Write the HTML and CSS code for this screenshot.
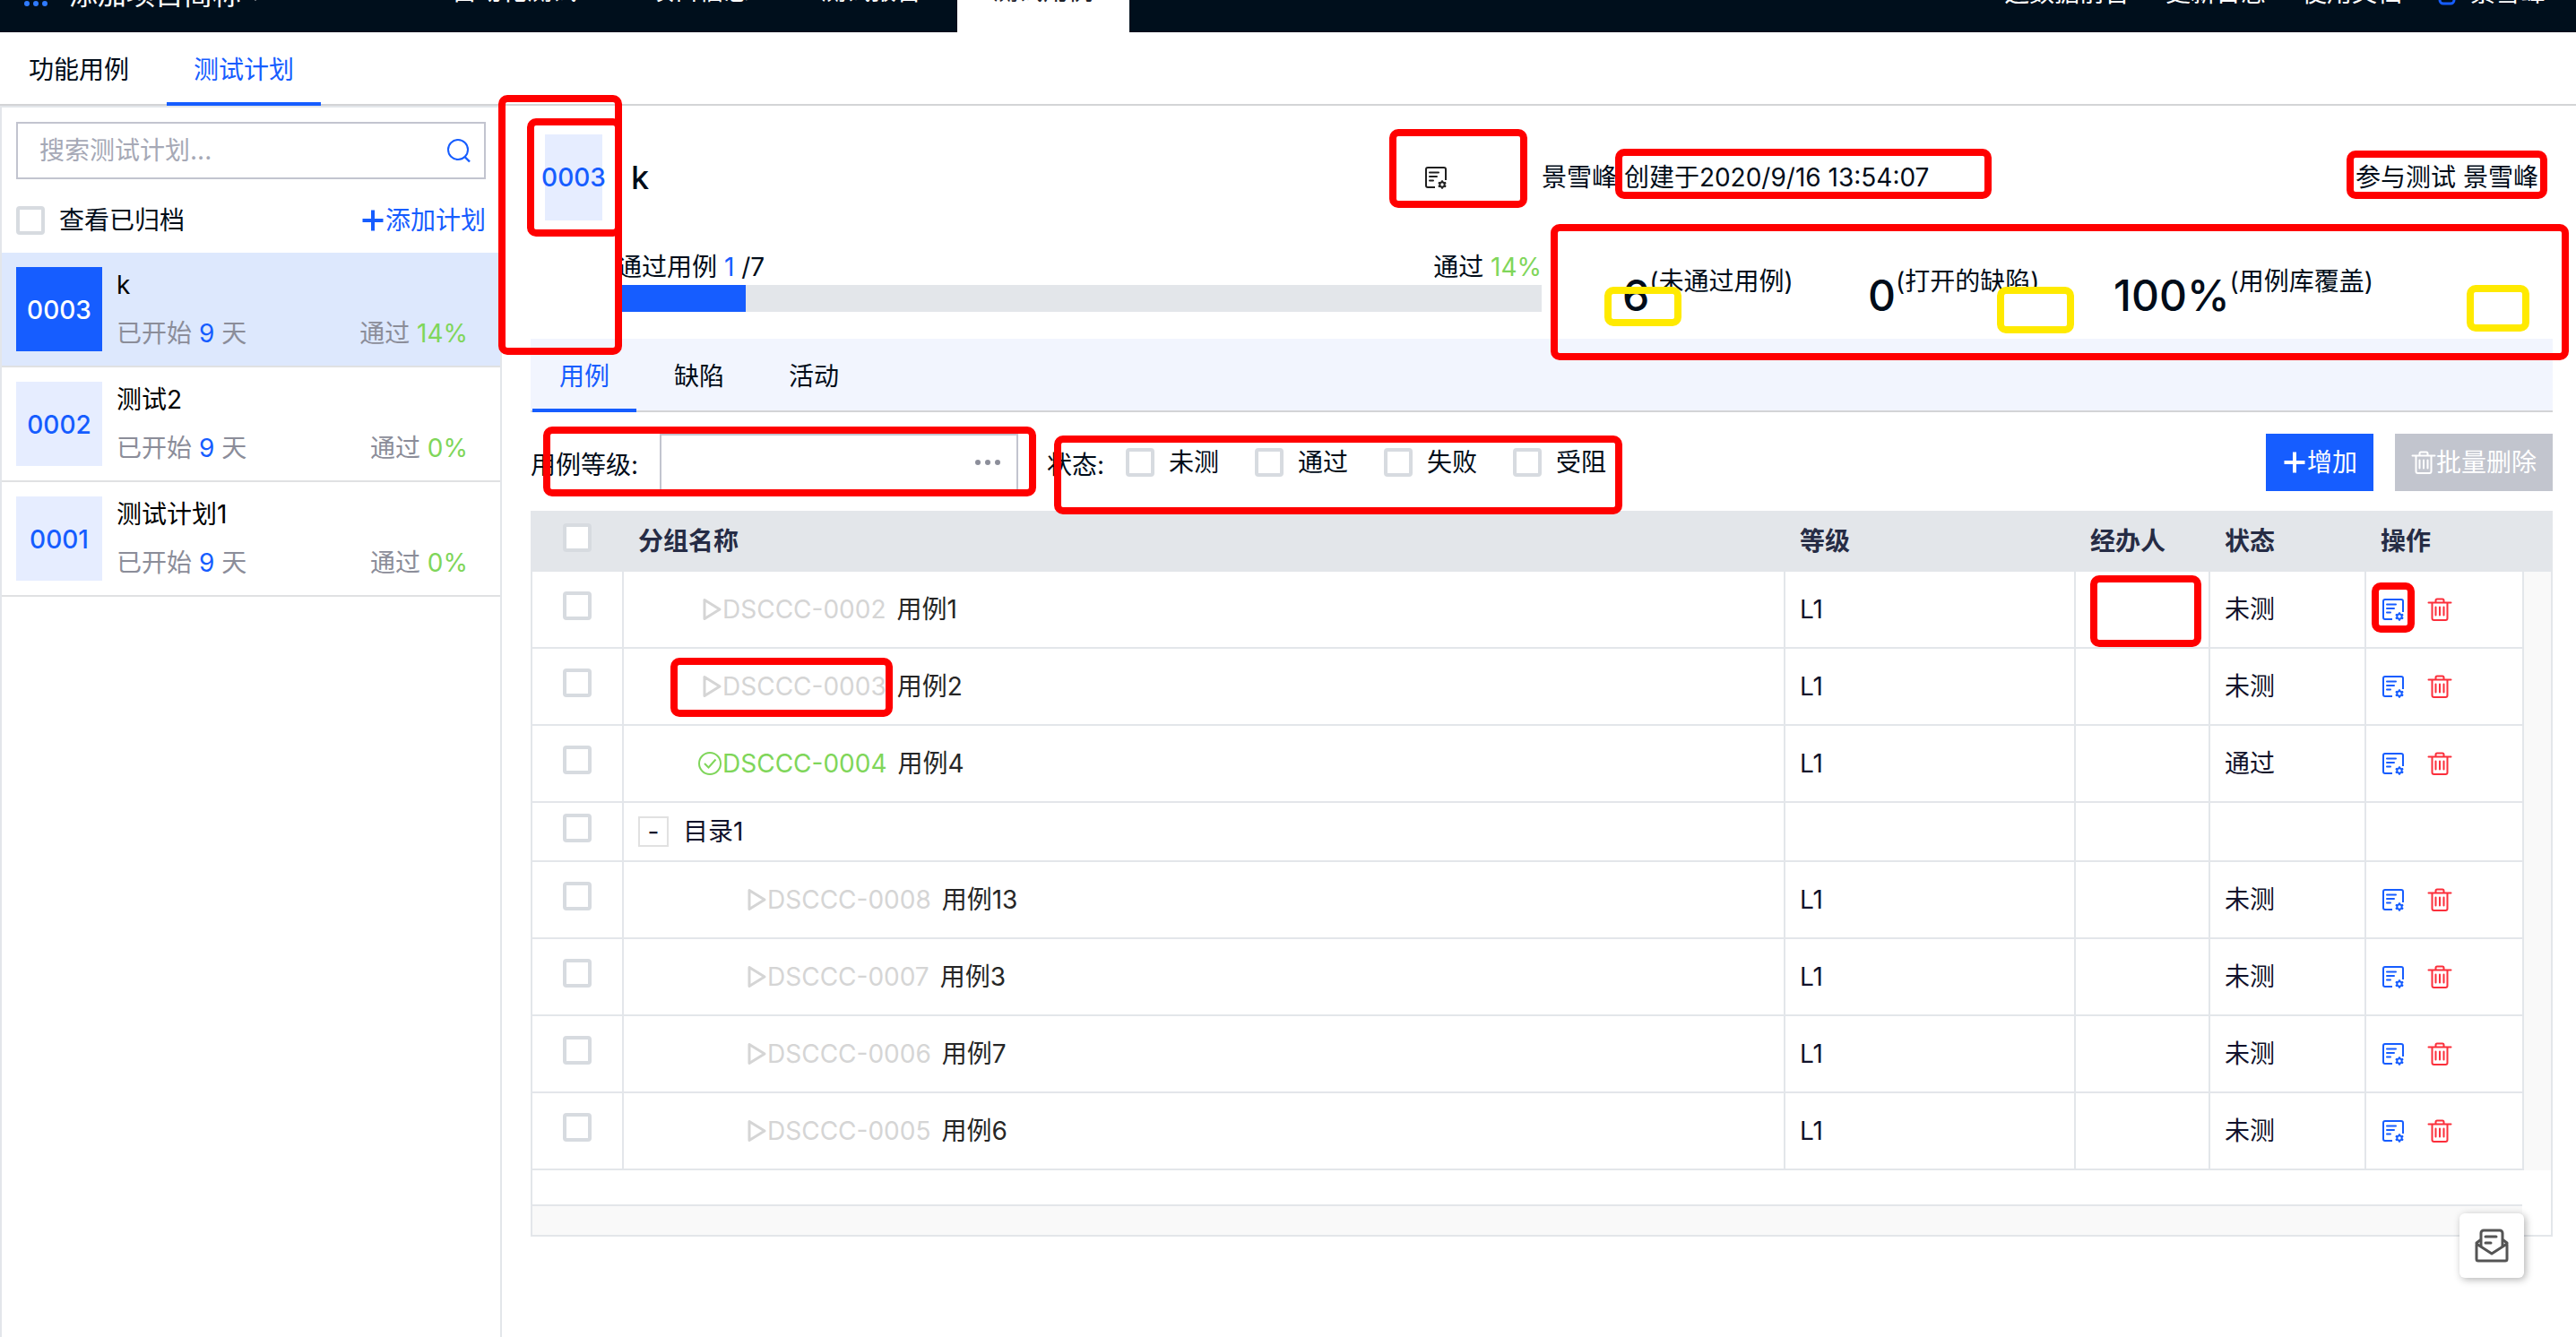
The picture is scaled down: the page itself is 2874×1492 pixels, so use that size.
FILE: index.html
```html
<!DOCTYPE html>
<html lang="zh-CN">
<head>
<meta charset="utf-8">
<title>测试计划</title>
<link rel="stylesheet" href="styles.css">
</head>
<body>
<svg class="sprite" aria-hidden="true">
  <symbol id="i-doc" viewBox="0 0 28 28">
    <path d="M13 25H5a2 2 0 0 1-2-2V5a2 2 0 0 1 2-2h18a2 2 0 0 1 2 2v12" fill="none" stroke="currentColor" stroke-width="2"/>
    <path d="M7 8.500h10M7 13h8M7 17.500h4" fill="none" stroke="currentColor" stroke-width="2" stroke-linecap="round"/>
    <circle cx="21" cy="22" r="2.700" fill="none" stroke="currentColor" stroke-width="2"/>
    <path d="M21 17.200v2M21 24.800v2M16.800 19.600l1.700 1M23.500 23.400l1.700 1M16.800 24.400l1.700-1M23.500 20.600l1.700-1" stroke="currentColor" stroke-width="1.800"/>
  </symbol>
  <symbol id="i-trash" viewBox="0 0 28 28">
    <path d="M1.500 6.500h25M9.500 6V4a1.500 1.500 0 0 1 1.500-1.500h6A1.500 1.500 0 0 1 18.500 4v2M5.500 6.500V24a2 2 0 0 0 2 2h13a2 2 0 0 0 2-2V6.500M9.500 11.500v9M14 11.500v9M18.500 11.500v9" fill="none" stroke="currentColor" stroke-width="2" stroke-linecap="round"/>
  </symbol>
  <symbol id="i-plus" viewBox="0 0 28 28">
    <path d="M14 2.500v23M2.500 14h23" stroke="currentColor" stroke-width="4"/>
  </symbol>
  <symbol id="i-play" viewBox="0 0 28 28">
    <path d="M8 3.500v21L25 14z" fill="none" stroke="currentColor" stroke-width="3" stroke-linejoin="round"/>
  </symbol>
  <symbol id="i-ok" viewBox="0 0 28 28">
    <circle cx="14" cy="14" r="12" fill="none" stroke="currentColor" stroke-width="2"/>
    <path d="M8 14l4.500 4.500L20.500 9.500" fill="none" stroke="currentColor" stroke-width="2"/>
  </symbol>
</svg>

<header class="topbar">
  <div class="brand">
    <svg class="grid-dots" viewBox="0 0 26 26"><g fill="#2f7bff"><circle cx="3" cy="3" r="3"/><circle cx="13" cy="3" r="3"/><circle cx="23" cy="3" r="3"/><circle cx="3" cy="13" r="3"/><circle cx="13" cy="13" r="3"/><circle cx="23" cy="13" r="3"/><circle cx="3" cy="23" r="3"/><circle cx="13" cy="23" r="3"/><circle cx="23" cy="23" r="3"/></g></svg>
    <span>添加项目简称</span>
    <svg class="caret" viewBox="0 0 16 10"><path d="M1 0h14L8 9z" fill="#fff"/></svg>
  </div>
  <nav class="topnav">
    <a href="#">自动化测试</a>
    <a href="#">项目信息</a>
    <a href="#">测试报告</a>
    <a href="#" class="active">测试用例</a>
  </nav>
  <div class="toplinks">
    <a href="#">造数据前台</a>
    <a href="#">更新日志</a>
    <a href="#">使用文档</a>
    <a href="#" class="user"><svg viewBox="0 0 20 28"><rect x="2" y="12" width="16" height="14" rx="4" fill="none" stroke="#165dff" stroke-width="3"/><circle cx="10" cy="6" r="5" fill="#165dff"/></svg>景雪峰</a>
  </div>
</header>

<nav class="tabs">
  <a href="#">功能用例</a>
  <a href="#" class="active">测试计划</a>
</nav>

<div class="page">
  <aside class="sidebar">
    <div class="search">
      <input type="text" placeholder="搜索测试计划..." aria-label="搜索测试计划">
      <svg viewBox="0 0 28 28"><circle cx="13" cy="13" r="11" fill="none" stroke="#165dff" stroke-width="2"/><path d="M20 20.500l6 6" stroke="#165dff" stroke-width="2.400"/></svg>
    </div>
    <div class="side-tools">
      <label class="check"><input type="checkbox">查看已归档</label>
      <button class="link-btn" type="button"><svg class="icon"><use href="#i-plus"/></svg>添加计划</button>
    </div>
    <ul class="plans">
      <li class="plan selected">
        <span class="tile">0003</span>
        <div class="plan-body">
          <div class="plan-name">k</div>
          <div class="plan-meta"><span>已开始 <b class="blue">9</b> 天</span><span>通过 <b class="green">14%</b></span></div>
        </div>
      </li>
      <li class="plan">
        <span class="tile">0002</span>
        <div class="plan-body">
          <div class="plan-name">测试2</div>
          <div class="plan-meta"><span>已开始 <b class="blue">9</b> 天</span><span>通过 <b class="green">0%</b></span></div>
        </div>
      </li>
      <li class="plan">
        <span class="tile">0001</span>
        <div class="plan-body">
          <div class="plan-name">测试计划1</div>
          <div class="plan-meta"><span>已开始 <b class="blue">9</b> 天</span><span>通过 <b class="green">0%</b></span></div>
        </div>
      </li>
    </ul>
  </aside>

  <main class="content">
    <section class="summary">
      <div class="half">
        <div class="head">
          <span class="head-tile">0003</span>
          <h1>k</h1>
          <button class="icon-btn dark" type="button" aria-label="编辑"><svg class="icon"><use href="#i-doc"/></svg></button>
        </div>
        <div class="progress">
          <div class="progress-text"><span>通过用例 <span class="blue">1</span> /7</span><span>通过 <span class="green">14%</span></span></div>
          <div class="bar"><div class="fill" style="width: 14%"></div></div>
        </div>
      </div>
      <div class="half">
        <div class="head meta"><span>景雪峰 创建于2020/9/16 13:54:07</span><span>参与测试 景雪峰</span></div>
        <div class="stats">
          <div><strong>6</strong><span>(未通过用例)</span></div>
          <div><strong>0</strong><span>(打开的缺陷)</span></div>
          <div><strong>100%</strong><span>(用例库覆盖)</span></div>
        </div>
      </div>
    </section>

    <nav class="tabs tinted">
      <a href="#" class="active">用例</a>
      <a href="#">缺陷</a>
      <a href="#">活动</a>
    </nav>

    <div class="filters">
      <label for="level">用例等级:</label>
      <div class="picker">
        <input id="level" type="text">
        <svg viewBox="0 0 28 6"><g fill="#8c8e9a"><circle cx="3" cy="3" r="3"/><circle cx="14" cy="3" r="3"/><circle cx="25" cy="3" r="3"/></g></svg>
      </div>
      <span class="state-label">状态:</span>
      <div class="states">
        <label class="check"><input type="checkbox">未测</label>
        <label class="check"><input type="checkbox">通过</label>
        <label class="check"><input type="checkbox">失败</label>
        <label class="check"><input type="checkbox">受阻</label>
      </div>
      <div class="actions">
        <button class="btn primary" type="button"><svg class="icon"><use href="#i-plus"/></svg>增加</button>
        <button class="btn" type="button" disabled><svg class="icon"><use href="#i-trash"/></svg>批量删除</button>
      </div>
    </div>

    <div class="table-box">
      <table>
        <colgroup><col class="c-check"><col><col class="c-level"><col class="c-owner"><col class="c-state"><col class="c-ops"><col class="c-gutter"></colgroup>
        <thead>
          <tr><th class="pick"><input type="checkbox" aria-label="全选"></th><th>分组名称</th><th>等级</th><th>经办人</th><th>状态</th><th>操作</th><th></th></tr>
        </thead>
        <tbody>
          <tr><td class="pick"><input type="checkbox" aria-label="用例1"></td><td><div class="case"><a href="#" class="code"><svg class="icon"><use href="#i-play"/></svg>DSCCC-0002</a>用例1</div></td><td>L1</td><td></td><td>未测</td><td><div class="ops"><button class="icon-btn" type="button" aria-label="编辑"><svg class="icon"><use href="#i-doc"/></svg></button><button class="icon-btn red" type="button" aria-label="删除"><svg class="icon"><use href="#i-trash"/></svg></button></div></td><td class="gutter" rowspan="8"></td></tr>
          <tr><td class="pick"><input type="checkbox" aria-label="用例2"></td><td><div class="case"><a href="#" class="code"><svg class="icon"><use href="#i-play"/></svg>DSCCC-0003</a>用例2</div></td><td>L1</td><td></td><td>未测</td><td><div class="ops"><button class="icon-btn" type="button" aria-label="编辑"><svg class="icon"><use href="#i-doc"/></svg></button><button class="icon-btn red" type="button" aria-label="删除"><svg class="icon"><use href="#i-trash"/></svg></button></div></td></tr>
          <tr><td class="pick"><input type="checkbox" aria-label="用例4"></td><td><div class="case"><a href="#" class="code green"><svg class="icon"><use href="#i-ok"/></svg>DSCCC-0004</a>用例4</div></td><td>L1</td><td></td><td>通过</td><td><div class="ops"><button class="icon-btn" type="button" aria-label="编辑"><svg class="icon"><use href="#i-doc"/></svg></button><button class="icon-btn red" type="button" aria-label="删除"><svg class="icon"><use href="#i-trash"/></svg></button></div></td></tr>
          <tr class="folder"><td class="pick"><input type="checkbox" aria-label="目录1"></td><td><div class="dir"><button class="toggle" type="button">-</button>目录1</div></td><td></td><td></td><td></td><td></td></tr>
          <tr><td class="pick"><input type="checkbox" aria-label="用例13"></td><td><div class="case nested"><a href="#" class="code"><svg class="icon"><use href="#i-play"/></svg>DSCCC-0008</a>用例13</div></td><td>L1</td><td></td><td>未测</td><td><div class="ops"><button class="icon-btn" type="button" aria-label="编辑"><svg class="icon"><use href="#i-doc"/></svg></button><button class="icon-btn red" type="button" aria-label="删除"><svg class="icon"><use href="#i-trash"/></svg></button></div></td></tr>
          <tr><td class="pick"><input type="checkbox" aria-label="用例3"></td><td><div class="case nested"><a href="#" class="code"><svg class="icon"><use href="#i-play"/></svg>DSCCC-0007</a>用例3</div></td><td>L1</td><td></td><td>未测</td><td><div class="ops"><button class="icon-btn" type="button" aria-label="编辑"><svg class="icon"><use href="#i-doc"/></svg></button><button class="icon-btn red" type="button" aria-label="删除"><svg class="icon"><use href="#i-trash"/></svg></button></div></td></tr>
          <tr><td class="pick"><input type="checkbox" aria-label="用例7"></td><td><div class="case nested"><a href="#" class="code"><svg class="icon"><use href="#i-play"/></svg>DSCCC-0006</a>用例7</div></td><td>L1</td><td></td><td>未测</td><td><div class="ops"><button class="icon-btn" type="button" aria-label="编辑"><svg class="icon"><use href="#i-doc"/></svg></button><button class="icon-btn red" type="button" aria-label="删除"><svg class="icon"><use href="#i-trash"/></svg></button></div></td></tr>
          <tr><td class="pick"><input type="checkbox" aria-label="用例6"></td><td><div class="case nested"><a href="#" class="code"><svg class="icon"><use href="#i-play"/></svg>DSCCC-0005</a>用例6</div></td><td>L1</td><td></td><td>未测</td><td><div class="ops"><button class="icon-btn" type="button" aria-label="编辑"><svg class="icon"><use href="#i-doc"/></svg></button><button class="icon-btn red" type="button" aria-label="删除"><svg class="icon"><use href="#i-trash"/></svg></button></div></td></tr>
        </tbody>
      </table>
      <div class="scroll-track"></div>
    </div>
  </main>
</div>

<button class="feedback" type="button" aria-label="反馈">
  <svg viewBox="0 0 40 40" fill="none" stroke="#545454" stroke-width="3" stroke-linejoin="round" stroke-linecap="round">
    <path d="M8 20V6a3 3 0 0 1 3-3h18a3 3 0 0 1 3 3v14"/>
    <path d="M13 10h12M13 17h6"/>
    <path d="M7 14l-4 3v18a2 2 0 0 0 2 2h30a2 2 0 0 0 2-2V17l-4-3M3 18l17 11 17-11"/>
  </svg>
</button>

<!-- review marks drawn over the page -->
<div class="marks">
  <i class="m-side"></i><i class="m-tile"></i><i class="m-edit"></i><i class="m-created"></i><i class="m-members"></i><i class="m-stats"></i>
  <i class="m-level"></i><i class="m-state"></i><i class="m-owner"></i><i class="m-op"></i><i class="m-code"></i>
  <i class="yellow m-y1"></i><i class="yellow m-y2"></i><i class="yellow m-y3"></i>
</div>
</body>
</html>
```
FILE: styles.css
```css
* { box-sizing: border-box; }

body {
  margin: 0;
  position: relative;
  min-height: 100vh;
  display: flex;
  flex-direction: column;
  overflow-x: hidden;
  background: #fff;
  color: #000c19;
  font: 28px/40px Inter, "Noto Sans CJK SC", sans-serif;
}

a { color: inherit; text-decoration: none; }
button, input { font: inherit; color: inherit; margin: 0; }
button { border: 0; padding: 0; background: none; }
h1, ul { margin: 0; padding: 0; }
ul { list-style: none; }
b { font-weight: 400; }

.sprite { display: none; }
.icon { width: 28px; height: 28px; flex: none; display: block; }
.blue { color: #165dff; }
.green { color: #7fd65a; }

input[type="checkbox"] {
  appearance: none;
  display: block;
  flex: none;
  width: 32px;
  height: 32px;
  background: #fff;
  border: 4px solid #d7dbe0;
  border-radius: 4px;
}
.check { display: flex; align-items: center; gap: 16px; }

/* top bar, scrolled partly out of view */
.topbar {
  flex: none;
  display: flex;
  height: 88px;
  margin-top: -52px;
  background: #000f1c;
  color: #fff;
}
.brand {
  display: flex;
  align-items: center;
  width: 464px;
  padding: 4px 0 0 27px;
  font-size: 32px;
}
.grid-dots { width: 26px; height: 26px; margin-right: 24px; }
.caret { width: 16px; height: 10px; margin: 6px 0 0 8px; }
.topnav { display: flex; }
.topnav a { padding: 22px 40px; }
.topnav .active { background: #fff; color: #1d2129; }
.toplinks {
  display: flex;
  gap: 40px;
  margin-left: auto;
  padding: 24px 34px 0 0;
}
.user { display: flex; gap: 16px; }
.user svg { width: 20px; height: 28px; margin-top: 6px; }

.tabs {
  flex: none;
  display: flex;
  gap: 12px;
  height: 82px;
  padding-left: 2px;
  border-bottom: 2px solid #d3d4d6;
}
.tabs a {
  height: 82px;
  padding: 22px 30px 0;
  border-bottom: 4px solid transparent;
}
.tabs .active { color: #165dff; border-color: #165dff; }
.tinted { background: #f2f5fe; margin-top: 12px; }

.page { flex: 1; display: flex; }

/* plan list */
.sidebar {
  flex: none;
  width: 560px;
  border: 2px solid #e3e6ea;
  border-bottom: 0;
}
.search {
  display: flex;
  align-items: center;
  height: 64px;
  margin: 16px 16px 0;
  padding: 0 14px 0 24px;
  border: 2px solid #c2c4cf;
}
.search input {
  flex: 1;
  min-width: 0;
  height: 40px;
  padding: 0;
  border: 0;
  outline: 0;
}
.search input::placeholder { color: #a6a9b6; opacity: 1; }
.search svg { width: 28px; height: 28px; }
.side-tools {
  display: flex;
  justify-content: space-between;
  align-items: center;
  height: 82px;
  padding: 10px 16px 0;
}
.link-btn { display: flex; align-items: center; color: #165dff; }
.plan {
  display: flex;
  gap: 16px;
  height: 128px;
  padding: 16px 36px 0 16px;
  border-bottom: 2px solid #e0e1e3;
}
.selected { background: #dde8fd; }
.tile {
  flex: none;
  width: 96px;
  height: 94px;
  background: #e6edff;
  color: #165dff;
  font-weight: 500;
  line-height: 96px;
  text-align: center;
}
.selected .tile { background: #165dff; color: #fff; }
.plan-body { flex: 1; color: #000; }
.plan-meta {
  display: flex;
  justify-content: space-between;
  margin-top: 14px;
  color: #8b8d99;
}

/* plan summary */
.content { flex: 1; min-width: 0; padding: 32px 26px 32px 32px; }
.summary { display: flex; }
.half { flex: 1 1 0; min-width: 0; }
.head { display: flex; align-items: center; height: 96px; }
.head-tile {
  display: flex;
  flex: none;
  justify-content: center;
  width: 64px;
  margin: 0 16px;
  background: #e6edff;
  color: #165dff;
  font-weight: 500;
  line-height: 96px;
}
.head h1 { margin-left: 16px; font-size: 36px; font-weight: 500; }
.head .dark { margin: 0 104px 0 auto; }
.meta { justify-content: space-between; padding-right: 16px; }
.progress { margin: 32px 0 0 96px; }
.progress-text { display: flex; justify-content: space-between; }
.bar { height: 30px; background: #e3e6ea; }
.fill { height: 30px; background: #165dff; }
.stats {
  display: grid;
  grid-template-columns: repeat(3, 274px);
  margin-top: 48px;
  padding-left: 90px;
  white-space: nowrap;
}
.stats div { display: flex; }
.stats strong { font-size: 48px; font-weight: 500; line-height: 72px; }

/* filters */
.filters { display: flex; align-items: center; padding: 24px 0 22px; }
.filters > label { width: 144px; padding-top: 6px; }
.picker {
  display: flex;
  align-items: center;
  width: 400px;
  height: 64px;
  padding: 0 18px;
  border: 2px solid #c2c4cf;
}
.picker input { flex: 1; min-width: 0; border: 0; padding: 0; outline: 0; }
.picker svg { width: 28px; height: 6px; }
.state-label { width: 88px; margin-left: 32px; padding-top: 6px; }
.states { display: flex; gap: 40px; }
.actions { display: flex; gap: 24px; margin-left: auto; }
.btn {
  display: flex;
  align-items: center;
  height: 64px;
  padding: 0 18px;
  background: #c2c5ce;
  color: #fff;
}
.primary { background: #165dff; }

/* case table */
.table-box { border: 2px solid #e3e6ea; border-top: 0; }
table {
  width: 100%;
  table-layout: fixed;
  border-collapse: separate;
  border-spacing: 0;
}
.c-check { width: 102px; }
.c-level { width: 324px; }
.c-owner { width: 150px; }
.c-state { width: 174px; }
.c-ops { width: 176px; }
.c-gutter { width: 30px; }
th {
  height: 68px;
  padding: 0 16px;
  background: #e3e6ea;
  color: #262c45;
  font-weight: 700;
  text-align: left;
}
td {
  height: 86px;
  padding: 0 16px;
  border-right: 2px solid #e3e6ea;
  border-bottom: 2px solid #e3e6ea;
  color: #11122b;
}
.folder td { height: 66px; }
th.pick { padding: 0 0 8px 34px; }
td.pick { padding: 0 0 8px 34px; }
td.gutter { background: #f9f9f9; border: 0; padding: 0; }
.case { display: flex; gap: 12px; padding-left: 66px; color: #262626; }
.nested { padding-left: 116px; }
.code { display: flex; align-items: center; color: #d5d5d5; }
.code.green { color: #7fd65a; }
.dir { display: flex; align-items: center; gap: 16px; }
.toggle {
  width: 34px;
  height: 34px;
  border: 2px solid #e1e1e1;
  line-height: 30px;
}
.ops { display: flex; gap: 24px; }
.icon-btn { color: #165dff; }
.icon-btn.red { color: #fb2f3b; }
.icon-btn.dark { color: #1f1f1f; }
.scroll-track {
  height: 34px;
  margin: 38px 32px 0 0;
  background: #f9f9f9;
  border-top: 2px solid #e3e6ea;
}

.feedback {
  position: fixed;
  right: 58px;
  bottom: 66px;
  display: grid;
  place-items: center;
  width: 72px;
  height: 72px;
  border-radius: 6px;
  background: #fff;
  box-shadow: 2px 2px 8px rgba(0, 0, 0, .3);
}
.feedback svg { width: 40px; height: 40px; }

/* review marks */
.marks i {
  position: absolute;
  border: 8px solid #f00;
  border-radius: 10px;
}
.marks .yellow { border-color: #ffea00; }
.m-side { left: 556px; top: 106px; width: 138px; height: 290px; }
.m-tile { left: 588px; top: 132px; width: 106px; height: 132px; }
.m-edit { left: 1550px; top: 144px; width: 154px; height: 88px; }
.m-created { left: 1802px; top: 166px; width: 420px; height: 56px; }
.m-members { left: 2618px; top: 168px; width: 224px; height: 54px; }
.m-stats { left: 1730px; top: 250px; width: 1136px; height: 152px; }
.m-level { left: 606px; top: 476px; width: 550px; height: 78px; }
.m-state { left: 1176px; top: 486px; width: 634px; height: 88px; }
.m-owner { left: 2332px; top: 642px; width: 124px; height: 80px; }
.m-op { left: 2646px; top: 650px; width: 48px; height: 56px; }
.m-code { left: 748px; top: 734px; width: 248px; height: 66px; }
.m-y1 { left: 1790px; top: 320px; width: 86px; height: 44px; }
.m-y2 { left: 2228px; top: 320px; width: 86px; height: 52px; }
.m-y3 { left: 2752px; top: 318px; width: 70px; height: 52px; }
```
